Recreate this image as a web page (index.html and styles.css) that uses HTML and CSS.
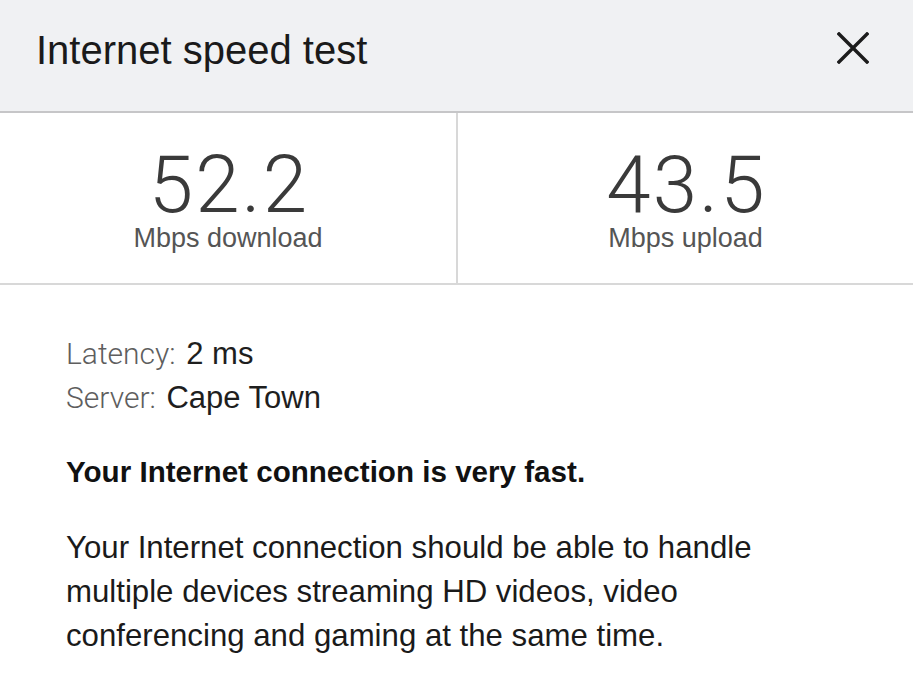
FILE: index.html
```html
<!DOCTYPE html>
<html lang="en">
<head>
<meta charset="utf-8">
<title>Internet speed test</title>
<link rel="stylesheet" href="styles.css">
</head>
<body>
<div class="panel">
  <header class="header">
    <h1 class="title">Internet speed test</h1>
    <button class="close" aria-label="Close">
      <svg width="32" height="32" viewBox="0 0 32 32"><path d="M2 2 L30 30 M30 2 L2 30" stroke="#1c1c1c" stroke-width="3.4" stroke-linecap="square" fill="none"/></svg>
    </button>
  </header>
  <section class="stats">
    <div class="stat">
      <div class="value">52.2</div>
      <div class="unit">Mbps download</div>
    </div>
    <div class="stat">
      <div class="value">43.5</div>
      <div class="unit">Mbps upload</div>
    </div>
  </section>
  <section class="details">
    <div class="line"><span class="key">Latency:</span> 2 ms</div>
    <div class="line"><span class="key">Server:</span> Cape Town</div>
    <p class="verdict">Your Internet connection is very fast.</p>
    <p class="desc">Your Internet connection should be able to handle multiple devices streaming HD videos, video conferencing and gaming at the same time.</p>
  </section>
</div>
</body>
</html>
```

FILE: styles.css
```css
* { box-sizing: border-box; }
html, body { margin: 0; padding: 0; background: #ffffff; }
body { font-family: "Liberation Sans", Arial, sans-serif; color: #1a1a1a; }

.panel { width: 913px; height: 683px; overflow: hidden; }

.header {
  height: 113px;
  background: #f0f1f3;
  border-bottom: 2px solid #c6c6c8;
  display: flex;
  justify-content: space-between;
  align-items: flex-start;
  padding: 26px 44px 0 36px;
}
.title {
  margin: 0;
  font-size: 40px;
  line-height: 48px;
  font-weight: normal;
  color: #1a1a1a;
}
.close {
  margin-top: 6px;
  padding: 0;
  border: 0;
  background: none;
  width: 32px;
  height: 32px;
}
.close svg { display: block; }

.stats {
  display: grid;
  grid-template-columns: 456px 1fr;
  height: 172px;
  border-bottom: 2px solid #d8d8d8;
}
.stat {
  text-align: center;
  padding-top: 37px;
}
.stat + .stat { border-left: 2px solid #d8d8d8; }
.value {
  font-family: Roboto, "Liberation Sans", sans-serif;
  font-weight: 300;
  font-size: 80px;
  line-height: 70px;
  letter-spacing: 2px;
  padding-left: 2px;
  color: #3a3a3a;
}
.unit {
  font-size: 27px;
  line-height: 34px;
  padding-top: 1px;
  color: #555555;
}

.details { padding: 47px 66px 0 66px; }
.line {
  font-size: 31px;
  line-height: 44px;
  color: #1e1e1e;
}
.key {
  font-family: Roboto, "Liberation Sans", sans-serif;
  font-weight: 300;
  font-size: 30px;
  color: #5e5e5e;
  margin-right: 2px;
}
.verdict {
  margin: 30px 0 0 0;
  font-size: 29.6px;
  line-height: 44px;
  font-weight: bold;
  color: #111111;
}
.desc {
  margin: 32px 0 0 0;
  max-width: 770px;
  font-size: 31.2px;
  line-height: 44px;
  color: #1a1a1a;
}
```
